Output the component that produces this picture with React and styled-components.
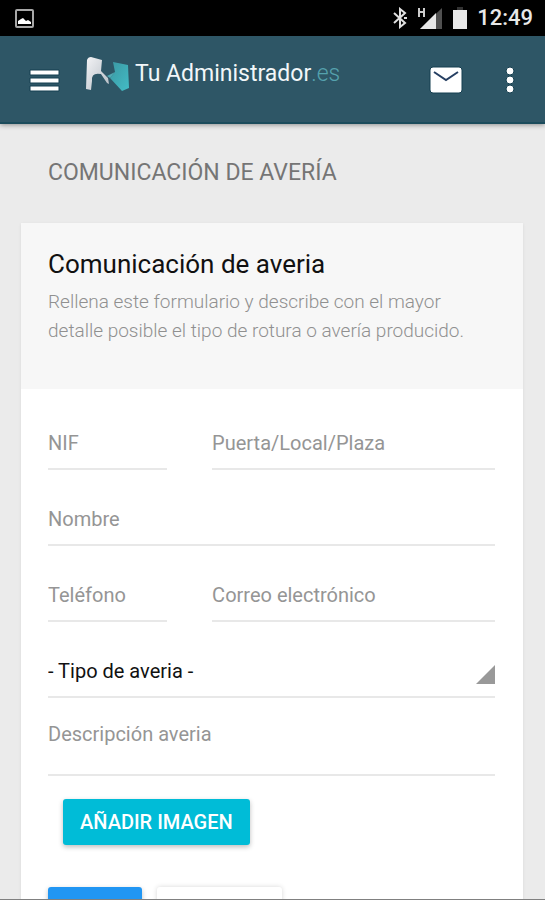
import * as React from 'react';
import styled, { createGlobalStyle } from 'styled-components';

const GlobalStyle = createGlobalStyle`
    *, *::before, *::after{
        box-sizing: border-box;
    }
    body{
        margin: 0;
        background: #ebebeb;
        font-family: Roboto, "Liberation Sans", sans-serif;
    }
    button, input, select, textarea{
        font-family: inherit;
    }
`;

const Screen = styled.div`
    display: flex;
    flex-direction: column;
    height: 100vh;
    border-bottom: 1px solid #808080;
`;

const StatusBar = styled.div`
    display: flex;
    flex: none;
    align-items: center;
    justify-content: space-between;
    height: 36px;
    padding: 0 12px 0 15px;
    background: #000;
    color: #e8e8e8;
`;

const StatusIcons = styled.div`
    display: flex;
    align-items: center;
    gap: 9px;
`;

const Clock = styled.time`
    font-size: 22px;
    font-weight: 500;
    line-height: 36px;
`;

const Toolbar = styled.header`
    display: flex;
    flex: none;
    align-items: center;
    height: 88px;
    padding: 2px 20px 0 28px;
    background: #2e5666;
    border-bottom: 2px solid #1c4c5c;
    box-shadow: 0 1px 5px rgba(0, 0, 0, .4);
    z-index: 1;
`;

const IconButton = styled.button`
    display: flex;
    padding: 0;
    border: 0;
    background: none;
    color: #fff;
    cursor: pointer;
    svg{
        display: block;
    }
`;

const Brand = styled.a`
    display: flex;
    flex: 1;
    align-items: center;
    gap: 4px;
    margin: 0 0 12px 26px;
    color: #f2f7f9;
    font-size: 23px;
    line-height: 36px;
    text-decoration: none;
    white-space: nowrap;
`;

const BrandSuffix = styled.span`
    color: #55a2ae;
    font-weight: 300;
`;

const Actions = styled.div`
    display: flex;
    align-items: center;
    gap: 32px;
`;

const Content = styled.main`
    flex: 1;
    min-height: 0;
    padding: 0 22px 0 21px;
    overflow-y: auto;
    scrollbar-width: none;
`;

const PageTitle = styled.h1`
    margin: 0;
    padding: 33px 27px 34px;
    color: #757575;
    font-size: 23px;
    font-weight: 400;
    line-height: 32px;
    text-transform: uppercase;
`;

const Card = styled.section`
    background: #fff;
    box-shadow: 0 1px 3px rgba(0, 0, 0, .08);
`;

const CardHeader = styled.div`
    padding: 25px 27px 44px;
    background: #f7f7f7;
`;

const CardTitle = styled.h2`
    margin: 0 0 7px;
    color: #111;
    font-size: 26px;
    font-weight: 400;
    line-height: 32px;
`;

const CardText = styled.p`
    margin: 0;
    color: #909090;
    font-size: 19px;
    font-weight: 300;
    line-height: 29px;
`;

const Form = styled.form`
    display: grid;
    grid-template-columns: 8fr 19fr;
    gap: 22px 45px;
    padding: 27px 28px 32px 27px;
`;

const Field = styled.div`
    position: relative;
    grid-column: ${props => props.$wide ? '1 / -1' : 'auto'};
    min-width: 0;
`;

const Input = styled.input`
    display: block;
    width: 100%;
    height: 54px;
    padding: 2px 0 0;
    border: 0;
    border-bottom: 2px solid #e8e8e8;
    border-radius: 0;
    outline: none;
    background: transparent;
    color: #111;
    font-size: 20px;
    &::placeholder{
        color: #959595;
        opacity: 1;
    }
`;

const TextArea = styled(Input)`
    height: 56px;
    padding: 0;
    line-height: 28px;
    resize: none;
    overflow: hidden;
`;

const Select = styled(Input)`
    appearance: none;
`;

const SelectCorner = styled.svg`
    position: absolute;
    right: 0;
    bottom: 14px;
    pointer-events: none;
`;

const Button = styled.button`
    height: 46px;
    padding: 0 17px;
    border: 0;
    border-radius: 3px;
    background: ${props => props.$background};
    box-shadow: 0 2px 5px rgba(0, 0, 0, .26);
    color: #fff;
    font-size: 20px;
    font-weight: 500;
    text-transform: uppercase;
    cursor: pointer;
`;

const ImageRow = styled.div`
    grid-column: 1 / -1;
    padding: 1px 15px 20px;
`;

const SubmitRow = styled.div`
    display: flex;
    grid-column: 1 / -1;
    gap: 15px;
`;

const SubmitButton = styled(Button)`
    width: 94px;
`;

const CancelButton = styled(Button)`
    width: 125px;
    box-shadow: 0 0 5px rgba(0, 0, 0, .16);
`;

const PictureIcon = () => (
    <svg width="19" height="19" viewBox="0 0 19 19" aria-hidden="true">
        <rect x="1" y="1" width="17" height="17" rx="1" fill="none" stroke="#a8a8a8" strokeWidth="2" />
        <path d="M3 15v-3l3-2 2-1 3 3 2-1 3 2v2z" fill="#fff" />
    </svg>
);

const BluetoothIcon = () => (
    <svg width="15" height="22" viewBox="0 0 15 22" fill="none" stroke="#e0e0e0" strokeWidth="2" aria-hidden="true">
        <path d="M1 6l11 10-5 4V2l5 4L1 16" />
        <path d="M11 11h3" />
    </svg>
);

const SignalIcon = () => (
    <svg width="26" height="24" viewBox="0 0 26 24" aria-hidden="true">
        <path d="M2 2v9M7 2v9M2 6h5" fill="none" stroke="#ccc" strokeWidth="2" />
        <path d="M3 23L25 2v21z" fill="#505050" />
        <path d="M3 23L19 7v16z" fill="#e8e8e8" />
    </svg>
);

const BatteryIcon = () => (
    <svg width="16" height="24" viewBox="0 0 16 24" aria-hidden="true">
        <path d="M5 1h6v3H5z" fill="#333" />
        <path d="M1 4h14v19H1z" fill="#e8e8e8" />
    </svg>
);

const MenuIcon = () => (
    <svg width="32" height="24" viewBox="0 0 32 24" fill="#fff" stroke="#153f50" strokeWidth="1" aria-hidden="true">
        <path d="M2 2h29v5H2zM2 10h29v5H2zM2 18h29v5H2z" />
    </svg>
);

const Logo = () => (
    <svg width="45" height="36" viewBox="0 0 45 36" aria-hidden="true">
        <defs>
            <linearGradient id="logo-gray" x1="0" y1="0" x2="1" y2="1">
                <stop offset="0" stopColor="#f4f4f6" />
                <stop offset="1" stopColor="#b4bcc4" />
            </linearGradient>
            <linearGradient id="logo-teal" x1="0" y1="0" x2="1" y2="1">
                <stop offset="0" stopColor="#3b98a3" />
                <stop offset="1" stopColor="#43bcc6" />
            </linearGradient>
        </defs>
        <path d="M1 4Q2 1 5 1l11 3-1 11 7 7 1 6-2-1-6-9Q5 16 6 25l-1 9-5-1z" fill="url(#logo-gray)" />
        <path d="M27 6l15 3 1 23-7 3-12-13 5-6z" fill="url(#logo-teal)" />
        <path d="M29 16l-5 6-3-2z" fill="#52a9b3" />
    </svg>
);

const MailIcon = () => (
    <svg width="34" height="28" viewBox="0 0 34 28" aria-hidden="true">
        <rect x="1" y="1" width="32" height="26" rx="3" fill="#fff" stroke="#153f50" />
        <path d="M5 6l12 8 12-8" fill="none" stroke="#263f62" strokeWidth="2" />
    </svg>
);

const MoreIcon = () => (
    <svg width="30" height="28" viewBox="0 0 30 28" fill="#fff" stroke="#153f50" strokeWidth="1" aria-hidden="true">
        <circle cx="15" cy="5" r="4" />
        <circle cx="15" cy="14" r="4" />
        <circle cx="15" cy="23" r="4" />
    </svg>
);

const FormField = ({ id, label, wide, type = 'text' }) => (
    <Field $wide={wide}>
        <Input id={id} name={id} type={type} placeholder={label} aria-label={label} />
    </Field>
);

const AveriaForm = () => (
    <Form onSubmit={(e) => { e.preventDefault(); }}>
        <FormField id="nif" label="NIF" />
        <FormField id="puerta" label="Puerta/Local/Plaza" />
        <FormField id="nombre" label="Nombre" wide />
        <FormField id="telefono" label="Teléfono" type="tel" />
        <FormField id="correo" label="Correo electrónico" type="email" />
        <Field $wide>
            <Select as="select" id="tipo" name="tipo" aria-label="Tipo de averia">
                <option value="">- Tipo de averia -</option>
            </Select>
            <SelectCorner width="19" height="19" viewBox="0 0 19 19" aria-hidden="true">
                <path d="M19 0v19H0z" fill="#999" />
            </SelectCorner>
        </Field>
        <Field $wide>
            <TextArea as="textarea" id="descripcion" name="descripcion" placeholder="Descripción averia" aria-label="Descripción averia" />
        </Field>
        <ImageRow>
            <Button type="button" $background="#00bcd7">Añadir imagen</Button>
        </ImageRow>
        <SubmitRow>
            <SubmitButton type="submit" $background="#2196f3" aria-label="Enviar" />
            <CancelButton type="reset" $background="#fff" aria-label="Cancelar" />
        </SubmitRow>
    </Form>
);

const App = () => (
    <Screen>
        <GlobalStyle />
        <StatusBar>
            <PictureIcon />
            <StatusIcons>
                <BluetoothIcon />
                <SignalIcon />
                <BatteryIcon />
                <Clock>12:49</Clock>
            </StatusIcons>
        </StatusBar>
        <Toolbar>
            <IconButton type="button" aria-label="Menú"><MenuIcon /></IconButton>
            <Brand href="#">
                <Logo />
                <span>Tu Administrador<BrandSuffix>.es</BrandSuffix></span>
            </Brand>
            <Actions>
                <IconButton type="button" aria-label="Mensajes"><MailIcon /></IconButton>
                <IconButton type="button" aria-label="Más opciones"><MoreIcon /></IconButton>
            </Actions>
        </Toolbar>
        <Content>
            <PageTitle>Comunicación de avería</PageTitle>
            <Card>
                <CardHeader>
                    <CardTitle>Comunicación de averia</CardTitle>
                    <CardText>Rellena este formulario y describe con el mayor detalle posible el tipo de rotura o avería producido.</CardText>
                </CardHeader>
                <AveriaForm />
            </Card>
        </Content>
    </Screen>
);

export default App;
